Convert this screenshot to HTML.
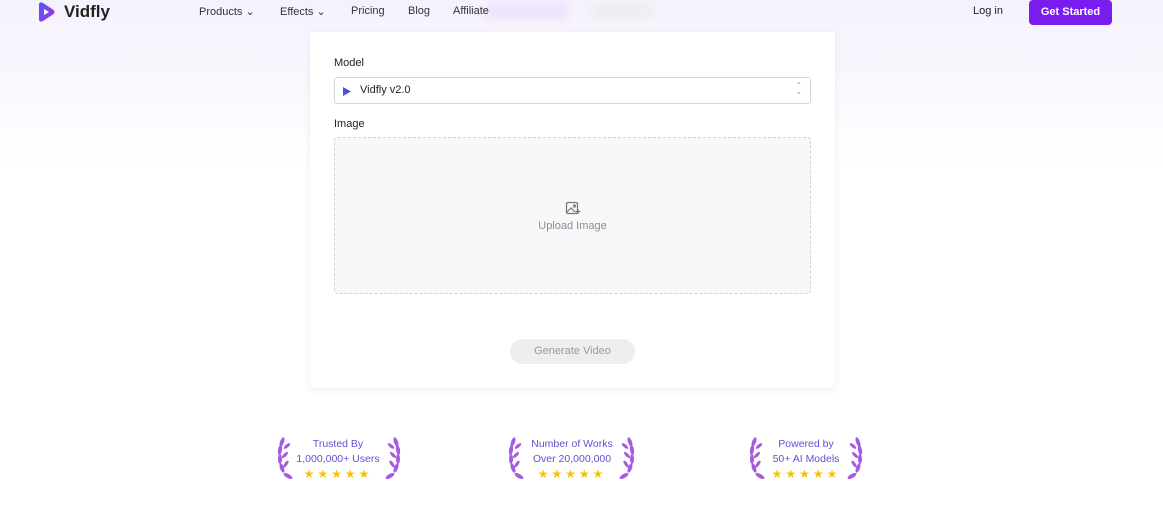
<!DOCTYPE html>
<html><head><meta charset="utf-8"><style>
*{box-sizing:border-box;margin:0;padding:0}
body{width:1163px;height:509px;overflow:hidden;font-family:"Liberation Sans",sans-serif;background:#fff;position:relative;font-size:11px;color:#222}
.bg{position:absolute;left:0;top:0;width:1163px;height:170px;background:linear-gradient(180deg,#f6f2fd 0%,#faf8fe 50%,#fff 100%)}
.nav{position:absolute;top:0;left:0;width:1163px;height:24px}
.logo{position:absolute;left:36px;top:1px;display:flex;align-items:center;gap:8px;font-weight:bold;font-size:17px;color:#222}
.nav a{position:absolute;top:5px;font-size:11px;color:#333}
.login{position:absolute;left:973px;top:5px;font-size:11px;color:#222}
.btn{position:absolute;left:1029px;top:0;width:83px;height:25px;background:#7a1cf0;color:#fff;border-radius:4px;font-size:11px;font-weight:bold;text-align:center;line-height:24px}
.card{position:absolute;left:310px;top:32px;width:525px;height:356px;background:#fff;border-radius:0 0 6px 6px;box-shadow:0 2px 8px rgba(0,0,0,.07)}
.lbl{position:absolute;left:24px;font-size:11px;color:#222}
.sel{position:absolute;left:24px;top:45px;width:477px;height:27px;border:1px solid #d6d6d9;border-radius:3px}
.up{position:absolute;left:24px;top:105px;width:477px;height:157px;border:1px dashed #d2d4d8;border-radius:4px;background:#f7f8f9;text-align:center;color:#8a8d92}
.gen{position:absolute;left:200px;top:307px;width:125px;height:25px;border-radius:13px;background:#eceef0;color:#999;text-align:center;line-height:25px;font-size:11px}
.bd{position:absolute;top:437px;width:140px;text-align:center;color:#6d4bd2;font-size:10.5px;line-height:15px}
.st{color:#f5c400;font-size:12px;letter-spacing:3px;margin-top:0px}
</style></head><body>
<div class="bg"></div>
<div style="position:absolute;left:485px;top:2px;width:85px;height:18px;background:#ece4fb;filter:blur(4px);border-radius:8px"></div>
<div style="position:absolute;left:590px;top:4px;width:65px;height:14px;background:#eee;filter:blur(4px);border-radius:8px"></div>
<div class="nav">
<div class="logo"><svg width="20" height="22" viewBox="0 0 20 22"><defs><linearGradient id="g" x1="0" y1="0" x2="1" y2="1"><stop offset="0" stop-color="#4a5cf0"/><stop offset="1" stop-color="#b02ee8"/></linearGradient></defs><path d="M3 4 Q3 0 7 2 L17 8.5 Q20 11 17 13.5 L7 20 Q3 22 3 18 Z" fill="url(#g)"/><path d="M8 8 L13 11 L8 14Z" fill="#fff"/></svg>Vidfly</div>
<a style="left:199px">Products ⌄</a><a style="left:280px">Effects ⌄</a><a style="left:351px">Pricing</a><a style="left:408px">Blog</a><a style="left:453px">Affiliate</a>
<span class="login">Log in</span><div class="btn">Get Started</div>
</div>
<div class="card">
<div class="lbl" style="top:25px">Model</div>
<div class="sel"><svg style="position:absolute;left:7px;top:8px" width="10" height="11" viewBox="0 0 10 11"><path d="M1 1 L9 5.5 L1 10Z" fill="#4a50e0"/></svg><span style="position:absolute;left:25px;top:6px;font-size:11px">Vidfly v2.0</span><span style="position:absolute;right:8px;top:5px;color:#999;font-size:8px;line-height:6px">⌃<br>⌄</span></div>
<div class="lbl" style="top:86px">Image</div>
<div class="up"><svg style="margin-top:62px" width="16" height="16" viewBox="0 0 16 16" fill="none" stroke="#777" stroke-width="1.2"><rect x="1.5" y="2.5" width="11" height="11" rx="1.5"/><path d="M2 12 L6 8 L10 12"/><circle cx="9.5" cy="6" r="1"/><path d="M13 9v5M10.5 11.5h5"/></svg><div style="font-size:11px;margin-top:1px">Upload Image</div></div>
<div class="gen">Generate Video</div>
</div>
<svg width="0" height="0" style="position:absolute"><defs><g id="lau"><g fill="#a65ae0"><ellipse cx="8" cy="6" rx="2" ry="5" transform="rotate(20 8 6)"/><ellipse cx="6" cy="14" rx="2" ry="5" transform="rotate(10 6 14)"/><ellipse cx="6" cy="23" rx="2" ry="5"/><ellipse cx="8" cy="32" rx="2" ry="5" transform="rotate(-20 8 32)"/><ellipse cx="14" cy="40" rx="2" ry="5" transform="rotate(-60 14 40)"/><ellipse cx="13" cy="10" rx="1.6" ry="4" transform="rotate(50 13 10)"/><ellipse cx="11" cy="19" rx="1.6" ry="4" transform="rotate(45 11 19)"/><ellipse cx="12" cy="28" rx="1.6" ry="4" transform="rotate(35 12 28)"/></g></g></defs></svg>
<div style="position:absolute;left:274px;top:436px"><svg width="20" height="46"><use href="#lau"/></svg></div>
<div style="position:absolute;left:384px;top:436px;transform:scaleX(-1)"><svg width="20" height="46"><use href="#lau"/></svg></div>
<div class="bd" style="left:268px">Trusted By<br>1,000,000+ Users<div class="st">★★★★★</div></div>
<div style="position:absolute;left:505px;top:436px"><svg width="20" height="46"><use href="#lau"/></svg></div>
<div style="position:absolute;left:618px;top:436px;transform:scaleX(-1)"><svg width="20" height="46"><use href="#lau"/></svg></div>
<div class="bd" style="left:502px">Number of Works<br>Over 20,000,000<div class="st">★★★★★</div></div>
<div style="position:absolute;left:746px;top:436px"><svg width="20" height="46"><use href="#lau"/></svg></div>
<div style="position:absolute;left:846px;top:436px;transform:scaleX(-1)"><svg width="20" height="46"><use href="#lau"/></svg></div>
<div class="bd" style="left:736px">Powered by<br>50+ AI Models<div class="st">★★★★★</div></div>
</body></html>
